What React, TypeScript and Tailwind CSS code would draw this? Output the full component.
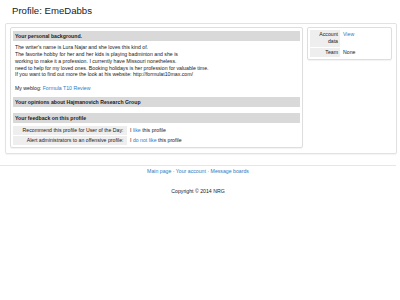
const lines = [
	"The writer's name is Lura Najar and she loves this kind of.",
	"The favorite hobby for her and her kids is playing badminton and she is",
	"working to make it a profession. I currently have Missouri nonetheless.",
	"need to help for my loved ones. Booking holidays is her profession for valuable time.",
	"If you want to find out more the look at his website: http://formulat10max.com/",
];

function Link({ children }: { children: React.ReactNode }) {
	return <a className="text-[#2f7bbf]">{children}</a>;
}

function Header({ children }: { children: React.ReactNode }) {
	return (
		<div className="bg-[#d9d9d9] px-[2px] py-[1.3px] font-bold">{children}</div>
	);
}

export default function App() {
	return (
		<div className="h-[300px] w-[400px] bg-white font-['Liberation_Sans',Arial,sans-serif] text-[5.2px] leading-[6.8px] text-[#1a1a1a]">
			<h1 className="pl-[12px] pt-[5.3px] text-[9.6px] leading-[11px] text-[#222]">
				Profile: EmeDabbs
			</h1>

			<div className="ml-[5px] mt-[6.7px] flex w-[392px] items-start gap-[4px] rounded-[2px] border border-[#e2e2e2] pb-[5.5px] pl-[4px] pr-[4px] pt-[3px] shadow-[0_1px_1px_rgba(0,0,0,0.05)]">
				{/* main column */}
				<div className="w-[293px] rounded-[2px] border border-[#dedede] px-[2px] pb-[1.2px] pt-[3.5px] shadow-[0_1px_1px_rgba(0,0,0,0.05)]">
					<Header>Your personal background.</Header>
					<p className="mb-[5.4px] mt-[3.4px] px-[2px]">
						{lines.map((l) => (
							<span key={l}>
								{l}
								<br />
							</span>
						))}
						<br />
						My weblog: <Link>Formula T10 Review</Link>
					</p>

					<Header>Your opinions about Hajmanovich Research Group</Header>
					<div className="h-[6.6px]" />

					<Header>Your feedback on this profile</Header>
					<div className="mt-[3px] grid grid-cols-[114px_1fr] gap-y-[1px]">
						<div className="bg-[#eeeeee] py-[1.3px] pr-[3.5px] text-right">
							Recommend this profile for User of the Day:
						</div>
						<div className="py-[1.3px] pl-[3px]">
							I <Link>like</Link> this profile
						</div>
						<div className="bg-[#eeeeee] py-[1.3px] pr-[3.5px] text-right">
							Alert administrators to an offensive profile:
						</div>
						<div className="py-[1.3px] pl-[3px]">
							I <Link>do not like</Link> this profile
						</div>
					</div>
				</div>

				{/* side column */}
				<div className="w-[85px] rounded-[2px] border border-[#dedede] px-[2px] pb-[2.3px] pt-[2px] shadow-[0_1px_1px_rgba(0,0,0,0.05)]">
					<div className="grid grid-cols-[30px_1fr] gap-y-[1px]">
						<div className="bg-[#eeeeee] py-[1.5px] pr-[2px] text-right">
							Account data
						</div>
						<div className="py-[1.5px] pl-[3px]">
							<Link>View</Link>
						</div>
						<div className="bg-[#eeeeee] py-[1.1px] pr-[2px] text-right">
							Team
						</div>
						<div className="py-[1.1px] pl-[3px]">None</div>
					</div>
				</div>
			</div>

			<div className="mt-[11px] w-[396px] border-t border-[#e6e6e6] pt-[2.3px] text-center">
				<div className="text-[#2f7bbf]">
					<a>Main page</a> · <a>Your account</a> · <a>Message boards</a>
				</div>
				<div className="mt-[13.2px] text-[#1a1a1a]">Copyright © 2014 NRG</div>
			</div>
		</div>
	);
}
